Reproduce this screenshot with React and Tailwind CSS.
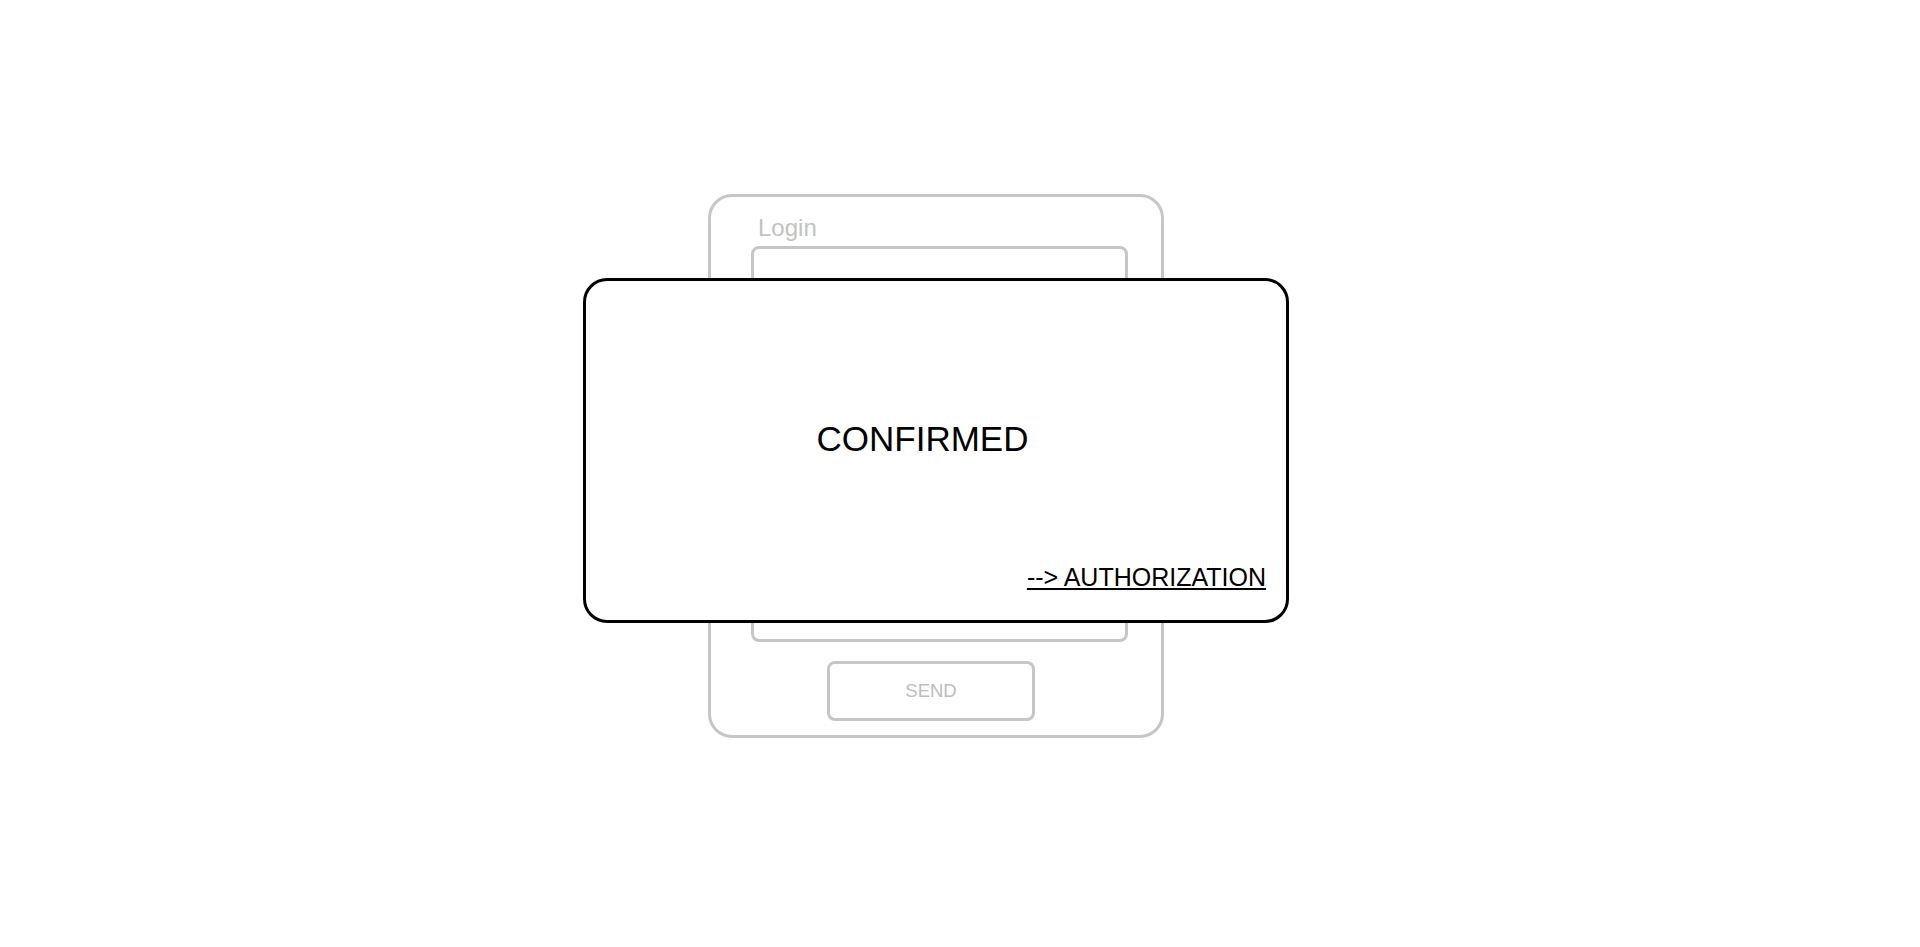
import React, { useState } from 'react';

const Field = ({ label, className = '' }) => (
  <div className={`flex flex-col ${className}`}>
    <label className="ml-[47px] text-[24px] leading-none text-[#c2c2c2]">{label}</label>
    <div className="ml-[40px] mr-[33px] mt-[6px] flex-1 rounded-[8px] border-[3px] border-[#c6c6c6]" />
  </div>
);

const App = () => {
  const [confirmed] = useState(true);

  return (
    <div
      className="flex h-[947px] w-full items-center justify-center bg-white pr-[48px] pb-[15px]"
      style={{ fontFamily: '"Liberation Sans", Arial, sans-serif' }}
    >
      <div className="relative">
        {/* Registration form (background) */}
        <form className="flex h-[544px] w-[456px] flex-col rounded-[24px] border-[3px] border-[#c6c6c6] pt-[19px] pb-[14px]">
          <Field label="Login" className="h-[80px]" />
          <Field label="Password" className="mt-[16px] flex-1" />
          <button
            type="button"
            className="mt-[19px] ml-[116px] h-[60px] w-[208px] rounded-[8px] border-[3px] border-[#c6c6c6] text-[18.5px] leading-none text-[#bdbdbd]"
          >
            SEND
          </button>
        </form>

        {/* Confirmation modal */}
        {confirmed && (
          <div className="absolute left-[-125px] top-[84px] flex h-[345px] w-[706px] flex-col rounded-[24px] border-[3px] border-black bg-white pt-[140px] pb-[30px]">
            <p className="pr-[27px] text-center text-[35px] leading-none text-black">CONFIRMED</p>
            <a href="#" className="mt-auto mr-[20px] self-end text-[25px] leading-none text-black underline">
              --&gt; AUTHORIZATION
            </a>
          </div>
        )}
      </div>
    </div>
  );
};

export default App;
